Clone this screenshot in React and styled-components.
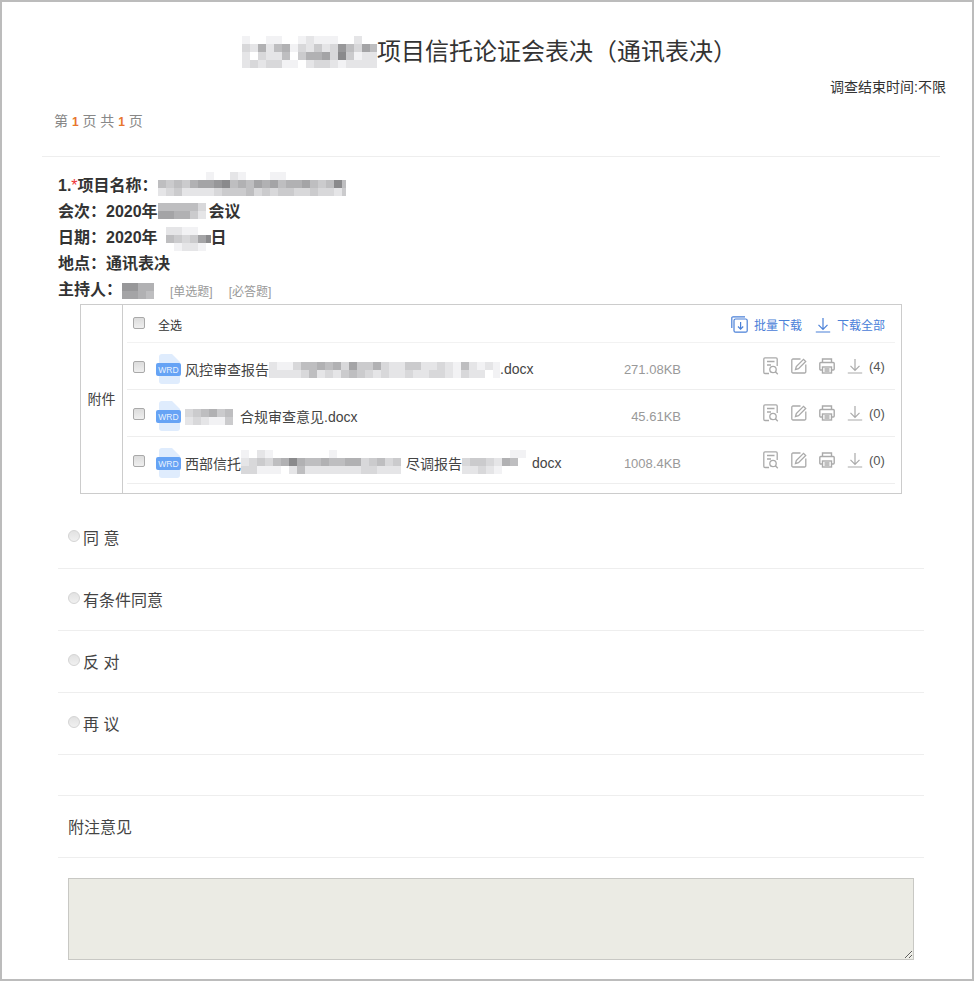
import React from 'react';
import styled, { createGlobalStyle } from 'styled-components';

const GlobalStyle = createGlobalStyle`
  html, body { margin: 0; padding: 0; background: #fff; }
  body { font-family: "Liberation Sans", "Noto Sans CJK SC", sans-serif; color: #333; }
`;

const Frame = styled.div`
  box-sizing: border-box;
  width: 974px;
  height: 981px;
  border: 2px solid #bcbcbc;
  padding-top: 35px;
  overflow: hidden;
`;

const Title = styled.h1`
  display: flex;
  justify-content: center;
  align-items: center;
  margin: 0 0 10px;
  padding-left: 5px;
  height: 30px;
  font-size: 24px;
  font-weight: 400;
  line-height: 30px;
  color: #333;
`;

const Deadline = styled.div`
  padding-right: 26px;
  text-align: right;
  font-size: 14px;
  line-height: 20px;
  color: #333;
`;

const Pager = styled.div`
  height: 20px;
  margin-top: 14px;
  padding-left: 52px;
  font-size: 14px;
  line-height: 20px;
  color: #888;
  b { font-size: 12px; line-height: 1; font-weight: 700; color: #e8762d; }
`;

const Divider = styled.div`
  margin: 25px 32px 0 40px;
  border-top: 1px solid #eee;
`;

const Question = styled.div`
  padding: 16px 0 0 56px;
`;

const Line = styled.div`
  display: flex;
  align-items: center;
  height: 26px;
  font-size: 16px;
  font-weight: 700;
  line-height: 26px;
  color: #333;
  i { font-style: normal; font-weight: 400; color: #e33; }
`;

const Tag = styled.span`
  margin: 4px 0 0 16px;
  font-size: 12px;
  font-weight: 400;
  color: #999;
`;

const Attach = styled.div`
  box-sizing: border-box;
  display: flex;
  width: 822px;
  height: 190px;
  margin: 1px 0 0 78px;
  border: 1px solid #ccc;
`;

const AttachLabel = styled.div`
  flex: none;
  width: 41px;
  padding-bottom: 2px;
  border-right: 1px solid #ccc;
  display: flex;
  align-items: center;
  justify-content: center;
  font-size: 14px;
  color: #444;
`;

const FileList = styled.div`
  flex: 1;
  min-width: 0;
  padding: 0 6px 0 4px;
`;

const HeadRow = styled.div`
  box-sizing: border-box;
  display: flex;
  align-items: center;
  height: 38px;
  padding: 2px 10px 0 6px;
  border-bottom: 1px solid #f2f2f2;
  font-size: 12px;
  color: #333;
`;

const SelectAll = styled.span`
  flex: 1;
  margin-left: 13px;
`;

const HeadLink = styled.a`
  display: flex;
  align-items: center;
  gap: 6px;
  margin-left: 13px;
  font-size: 12px;
  color: #4a80d8;
`;

const FileRow = styled.div`
  box-sizing: border-box;
  display: flex;
  align-items: center;
  height: 47px;
  padding: 0 10px 0 6px;
  border-bottom: 1px solid #eee;
`;

const Check = styled.input.attrs({ type: 'checkbox' })`
  appearance: none;
  flex: none;
  box-sizing: border-box;
  width: 12px;
  height: 12px;
  margin: ${p => p.$head ? '-3px' : '1px'} 0 0;
  border: 1px solid #a9a9a9;
  border-radius: 2px;
  background: linear-gradient(#dcdcdc, #efefef);
`;

const DocIcon = styled.svg`
  flex: none;
  width: 26px;
  height: 30px;
  margin: 6px 0 0 11px;
`;

const FileName = styled.div`
  flex: 1;
  display: flex;
  align-items: center;
  margin: 6px 0 0 3px;
  font-size: 14px;
  color: #444;
  white-space: nowrap;
`;

const Size = styled.div`
  margin: 6px 82px 0 0;
  font-size: 13px;
  color: #999;
`;

const Actions = styled.div`
  display: flex;
  align-items: center;
  gap: 12px;
`;

const Count = styled.span`
  margin-left: -6px;
  width: 16px;
  font-size: 13px;
  color: #555;
`;

const Option = styled.label`
  box-sizing: border-box;
  display: flex;
  align-items: center;
  height: 62px;
  padding: 0 0 2px 10px;
  border-bottom: 1px solid #eee;
  font-size: 16px;
  color: #444;
`;

const Radio = styled.input.attrs({ type: 'radio' })`
  appearance: none;
  box-sizing: border-box;
  flex: none;
  width: 12px;
  height: 12px;
  margin: -2px 3px 0 0;
  border: 1px solid #d4d4d4;
  border-radius: 50%;
  background: linear-gradient(#e2e2e2, #f0f0f0);
`;

const Options = styled.div`
  width: 866px;
  margin: 13px 0 0 56px;
`;

const Spacer = styled.div`
  height: 41px;
  box-sizing: border-box;
  border-bottom: 1px solid #eee;
`;

const Remark = styled.textarea`
  display: block;
  box-sizing: border-box;
  width: 846px;
  height: 82px;
  margin: 20px 0 0 66px;
  border: 1px solid #c8c8c4;
  border-radius: 0;
  background: #ebebe4;
  outline: none;
`;

const Tiles = styled.span`
  flex: none;
  display: inline-grid;
  grid-template-columns: repeat(${p => p.$cols}, ${p => p.$size}px);
  grid-auto-rows: ${p => p.$size}px;
  margin: ${p => p.$margin || '0'};
  width: ${p => p.$width ? `${p.$width}px` : 'auto'};
  overflow: hidden;
`;

// rows are strings of hex digits: 0 is white, f is the darkest grey
function Mosaic({ rows, size = 8, width, margin }) {
  const tiles = rows.flatMap(r => r.split(''));
  return (
    <Tiles $cols={rows[0].length} $size={size} $width={width} $margin={margin}>
      {tiles.map((t, i) => {
        const v = 255 - parseInt(t, 16) * 13;
        return <span key={i} style={{ background: `rgb(${v},${v},${v + 2})` }} />;
      })}
    </Tiles>
  );
}

const Doc = () => (
  <DocIcon viewBox="0 0 26 30">
    <path d="M3 3a3 3 0 0 1 3-3h10l8 8v19a3 3 0 0 1-3 3H6a3 3 0 0 1-3-3z" fill="#dfecfd" />
    <rect x="0" y="9" width="25" height="13" rx="2" fill="#66a3f5" />
    <text x="12.5" y="18.5" textAnchor="middle" fontSize="8.5" fill="#e8f1fe" fontFamily="Liberation Sans">WRD</text>
  </DocIcon>
);

const gray = { fill: 'none', stroke: '#aaa', strokeWidth: 1.3 };

const ReviewIcon = () => (
  <svg width="16" height="18" viewBox="0 0 16 18" {...gray}>
    <path d="M6 16.5H2a1.2 1.2 0 0 1-1.2-1.2V2A1.2 1.2 0 0 1 2 .8h11A1.2 1.2 0 0 1 14.2 2v7" />
    <path d="M4 4.5h7.5M4 8h4" />
    <circle cx="10" cy="12.5" r="3.2" />
    <path d="M12.4 14.8l2.4 2.4" />
  </svg>
);

const EditIcon = () => (
  <svg width="16" height="16" viewBox="0 0 16 16" {...gray}>
    <path d="M9.5 1H2a1.2 1.2 0 0 0-1.2 1.2v11.6A1.2 1.2 0 0 0 2 15h11.6a1.2 1.2 0 0 0 1.2-1.2V6.5" />
    <path d="M4.5 11.5l.8-3L12.5 1.300l2.200 2.200-7.200 7.200z" />
  </svg>
);

const PrintIcon = () => (
  <svg width="16" height="16" viewBox="0 0 16 16" {...gray} strokeWidth="1.4">
    <path d="M3.500 4.500V1h9v3.500" />
    <path d="M3.500 12H1.800A1 1 0 0 1 .8 11V5.500a1 1 0 0 1 1-1h12.400a1 1 0 0 1 1 1V11a1 1 0 0 1-1 1h-1.700" />
    <rect x="3.500" y="9" width="9" height="6" />
    <path d="M5.500 11h5M5.500 13h5" />
  </svg>
);

const SaveIcon = ({ color = '#aaa', width = 16 }) => (
  <svg width={width} height="16" viewBox="0 0 16 16" fill="none" stroke={color} strokeWidth="1.2">
    <path d="M8 1v11M3.500 7.800L8 12.300l4.500-4.500M.8 15h14.400" />
  </svg>
);

const BatchIcon = () => (
  <svg width="17" height="17" viewBox="0 0 17 17" fill="none" stroke="#4a80d8" strokeWidth="1.2">
    <path d="M14 .8H2A1.2 1.2 0 0 0 .8 2v10" />
    <rect x="3" y="3" width="13.200" height="13.200" rx="1.500" />
    <path d="M9.600 6v7M7 10.500l2.600 2.600 2.600-2.600" />
  </svg>
);

const files = [
  {
    name: (
      <>
        风控审查报告
        <Mosaic
          width={231}
          margin="1px 0 0"
          rows={[
            '21135565637446322442232152121',
            '22223523245432322322332132201',
          ]}
        />
        .docx
      </>
    ),
    size: '271.08KB',
    count: 4,
  },
  {
    name: (
      <>
        <Mosaic
          width={55}
          margin="1px 0 0"
          rows={['3456450', '2321140']}
        />
        合规审查意见.docx
      </>
    ),
    size: '45.61KB',
    count: 0,
  },
  {
    name: (
      <>
        西部信托
        <Mosaic
          width={165}
          margin="0 0 3px"
          rows={[
            '102100000001000000000',
            '234356965565566345340',
            '331110252222222332220',
          ]}
        />
        尽调报告
        <Mosaic
          width={70}
          margin="0 0 3px"
          rows={['000000110', '344326500', '223210000']}
        />
        docx
      </>
    ),
    size: '1008.4KB',
    count: 0,
  },
];

const options = ['同 意', '有条件同意', '反 对', '再 议'];

export default function App() {
  return (
    <Frame>
      <GlobalStyle />
      <Title>
        <Mosaic
          rows={[
            '10011001211100200',
            '32625613242385375',
            '20322504667394122',
            '23233110233212222',
          ]}
          width={135}
          size={8}
        />
        项目信托论证会表决（通讯表决）
      </Title>
      <Deadline>调查结束时间:不限</Deadline>
      <Pager>第 <b>1</b> 页 共 <b>1</b> 页</Pager>
      <Divider />
      <Question>
        <Line>
          1.<i>*</i>项目名称：
          <Mosaic
            margin="0 0 4px"
            rows={[
              '000000100210001100000000',
              '545467789565767566754595',
              '234222234445343443343324',
            ]}
            width={188}
          />
        </Line>
        <Line>
          会次：2020年
          <Mosaic margin="0 0 2px" width={51} rows={['5555530', '7766420']} />
          会议
        </Line>
        <Line>
          日期：2020年
          <Mosaic margin="2px 0 0" width={53} rows={['0221100', '0543479', '0012210']} />
          日
        </Line>
        <Line>地点：通讯表决</Line>
        <Line>
          主持人：
          <Mosaic margin="2px 0 0" width={32} rows={['8866', '7765']} />
          <Tag>[单选题]</Tag>
          <Tag>[必答题]</Tag>
        </Line>
      </Question>
      <Attach>
        <AttachLabel>附件</AttachLabel>
        <FileList>
          <HeadRow>
            <Check $head />
            <SelectAll>全选</SelectAll>
            <HeadLink><BatchIcon />批量下载</HeadLink>
            <HeadLink><SaveIcon color="#4a80d8" />下载全部</HeadLink>
          </HeadRow>
          {files.map((f, i) => (
            <FileRow key={i}>
              <Check />
              <Doc />
              <FileName>{f.name}</FileName>
              <Size>{f.size}</Size>
              <Actions>
                <ReviewIcon />
                <EditIcon />
                <PrintIcon />
                <SaveIcon />
                <Count>({f.count})</Count>
              </Actions>
            </FileRow>
          ))}
        </FileList>
      </Attach>
      <Options>
        {options.map(o => (
          <Option key={o}><Radio name="vote" />{o}</Option>
        ))}
        <Spacer />
        <Option>附注意见</Option>
      </Options>
      <Remark readOnly />
    </Frame>
  );
}
